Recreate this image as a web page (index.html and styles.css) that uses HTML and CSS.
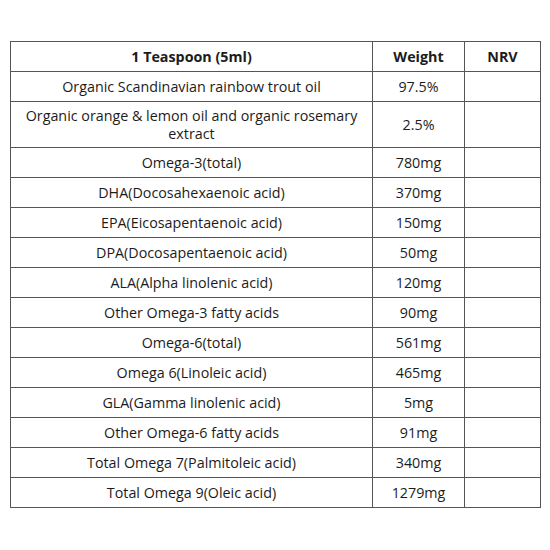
FILE: index.html
```html
<!DOCTYPE html>
<html>
<head>
<meta charset="utf-8">
<link rel="stylesheet" href="styles.css">
</head>
<body>
<div class="page">
<table class="nutri">
<colgroup><col class="c1"><col class="c2"><col class="c3"></colgroup>
<thead>
<tr><th>1 Teaspoon (5ml)</th><th>Weight</th><th>NRV</th></tr>
</thead>
<tbody>
<tr><td>Organic Scandinavian rainbow trout oil</td><td>97.5%</td><td></td></tr>
<tr class="tall"><td>Organic orange &amp; lemon oil and organic rosemary extract</td><td>2.5%</td><td></td></tr>
<tr><td>Omega-3(total)</td><td>780mg</td><td></td></tr>
<tr><td>DHA(Docosahexaenoic acid)</td><td>370mg</td><td></td></tr>
<tr><td>EPA(Eicosapentaenoic acid)</td><td>150mg</td><td></td></tr>
<tr><td>DPA(Docosapentaenoic acid)</td><td>50mg</td><td></td></tr>
<tr><td>ALA(Alpha linolenic acid)</td><td>120mg</td><td></td></tr>
<tr><td>Other Omega-3 fatty acids</td><td>90mg</td><td></td></tr>
<tr><td>Omega-6(total)</td><td>561mg</td><td></td></tr>
<tr><td>Omega 6(Linoleic acid)</td><td>465mg</td><td></td></tr>
<tr><td>GLA(Gamma linolenic acid)</td><td>5mg</td><td></td></tr>
<tr><td>Other Omega-6 fatty acids</td><td>91mg</td><td></td></tr>
<tr><td>Total Omega 7(Palmitoleic acid)</td><td>340mg</td><td></td></tr>
<tr><td>Total Omega 9(Oleic acid)</td><td>1279mg</td><td></td></tr>
</tbody>
</table>
</div>
</body>
</html>
```
FILE: styles.css
```css
html, body {
  margin: 0;
  padding: 0;
  background: #ffffff;
}
.page {
  padding: 41px 10px 0 10px;
}
.nutri {
  border-collapse: collapse;
  width: 530px;
  table-layout: fixed;
  font-family: "Open Sans", "Noto Sans", sans-serif;
  font-size: 14.3px;
  color: #1c1c1c;
}
.c1 { width: 362px; }
.c2 { width: 92px; }
.c3 { width: 76px; }
.nutri th, .nutri td {
  border: 1px solid #555555;
  text-align: center;
  vertical-align: middle;
  height: 30px;
  padding: 0 4px;
  line-height: 18px;
  box-sizing: border-box;
}
.nutri th {
  font-weight: 700;
}
.nutri tr.tall td {
  height: 46px;
}
```
